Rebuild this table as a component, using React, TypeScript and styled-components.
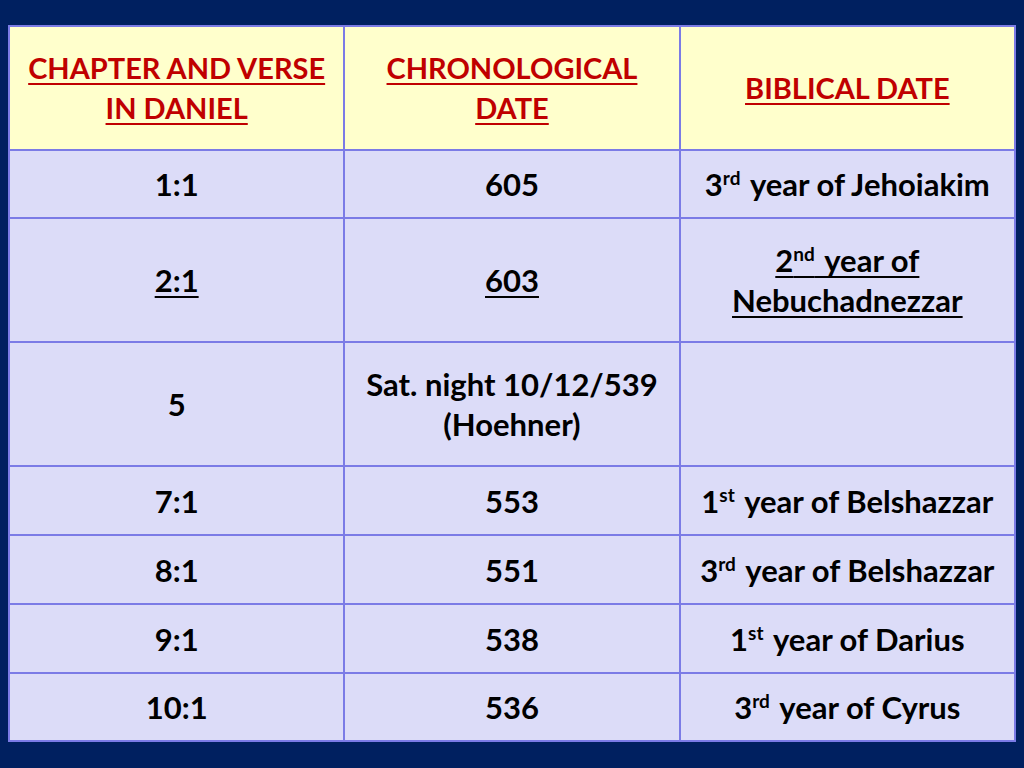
import React from 'react';
import styled, { createGlobalStyle } from 'styled-components';

const GlobalStyle = createGlobalStyle`
  html, body {
    margin: 0;
    padding: 0;
    background: #002060;
  }
  body {
    font-family: Lato, "Open Sans", "Liberation Sans", sans-serif;
  }
`;

const Page = styled.div`
  width: 1024px;
  height: 768px;
  box-sizing: border-box;
  padding: 25px 8px 0 8px;
  background: #002060;
`;

const Table = styled.div`
  display: grid;
  grid-template-columns: repeat(3, 1fr);
  grid-template-rows: 122px 66px 122px 122px 67px 67px 67px 66px;
  width: 1008px;
  gap: 2px;
  padding: 2px;
  box-sizing: border-box;
  background: #7b7be6;
`;

const Cell = styled.div<{ $head?: boolean }>`
  display: flex;
  align-items: center;
  justify-content: center;
  text-align: center;
  background: ${({ $head }) => ($head ? '#ffffcc' : '#dcdcf8')};
  color: ${({ $head }) => ($head ? '#c00000' : '#000000')};
  font-weight: 700;
  font-size: ${({ $head }) => ($head ? '29px' : '31px')};
  line-height: 40px;
  text-decoration: ${({ $head }) => ($head ? 'underline' : 'none')};
  text-decoration-thickness: 2px;
  text-underline-offset: 4px;
`;

const Underlined = styled.span`
  text-decoration: underline;
  text-decoration-thickness: 2px;
  text-underline-offset: 4px;
  text-decoration-skip-ink: none;
`;

const Sup = styled.sup`
  font-size: 19px;
  line-height: 0;
  vertical-align: 11px;
`;

type Row = {
  verse: React.ReactNode;
  date: React.ReactNode;
  biblical: React.ReactNode;
};

const ord = (n: string, s: string, rest: string) => (
  <span>
    {n}
    <Sup>{s}</Sup>
    {'\u00a0\u200a' + rest}
  </span>
);

const ROWS: Row[] = [
  { verse: '1:1', date: '605', biblical: ord('3', 'rd', 'year of Jehoiakim') },
  {
    verse: <Underlined>2:1</Underlined>,
    date: <Underlined>603</Underlined>,
    biblical: (
      <Underlined>
        {ord('2', 'nd', 'year of')}
        <br />
        Nebuchadnezzar
      </Underlined>
    ),
  },
  {
    verse: '5',
    date: (
      <span>
        Sat. night 10/12/539
        <br />
        (Hoehner)
      </span>
    ),
    biblical: '',
  },
  { verse: '7:1', date: '553', biblical: ord('1', 'st', 'year of Belshazzar') },
  { verse: '8:1', date: '551', biblical: ord('3', 'rd', 'year of Belshazzar') },
  { verse: '9:1', date: '538', biblical: ord('1', 'st', 'year of Darius') },
  { verse: '10:1', date: '536', biblical: ord('3', 'rd', 'year of Cyrus') },
];

export default function App() {
  return (
    <Page>
      <GlobalStyle />
      <Table>
        <Cell $head>
          CHAPTER AND VERSE
          <br />
          IN DANIEL
        </Cell>
        <Cell $head>
          CHRONOLOGICAL
          <br />
          DATE
        </Cell>
        <Cell $head>BIBLICAL DATE</Cell>
        {ROWS.map((row, i) => (
          <React.Fragment key={i}>
            <Cell>{row.verse}</Cell>
            <Cell>{row.date}</Cell>
            <Cell>{row.biblical}</Cell>
          </React.Fragment>
        ))}
      </Table>
    </Page>
  );
}
